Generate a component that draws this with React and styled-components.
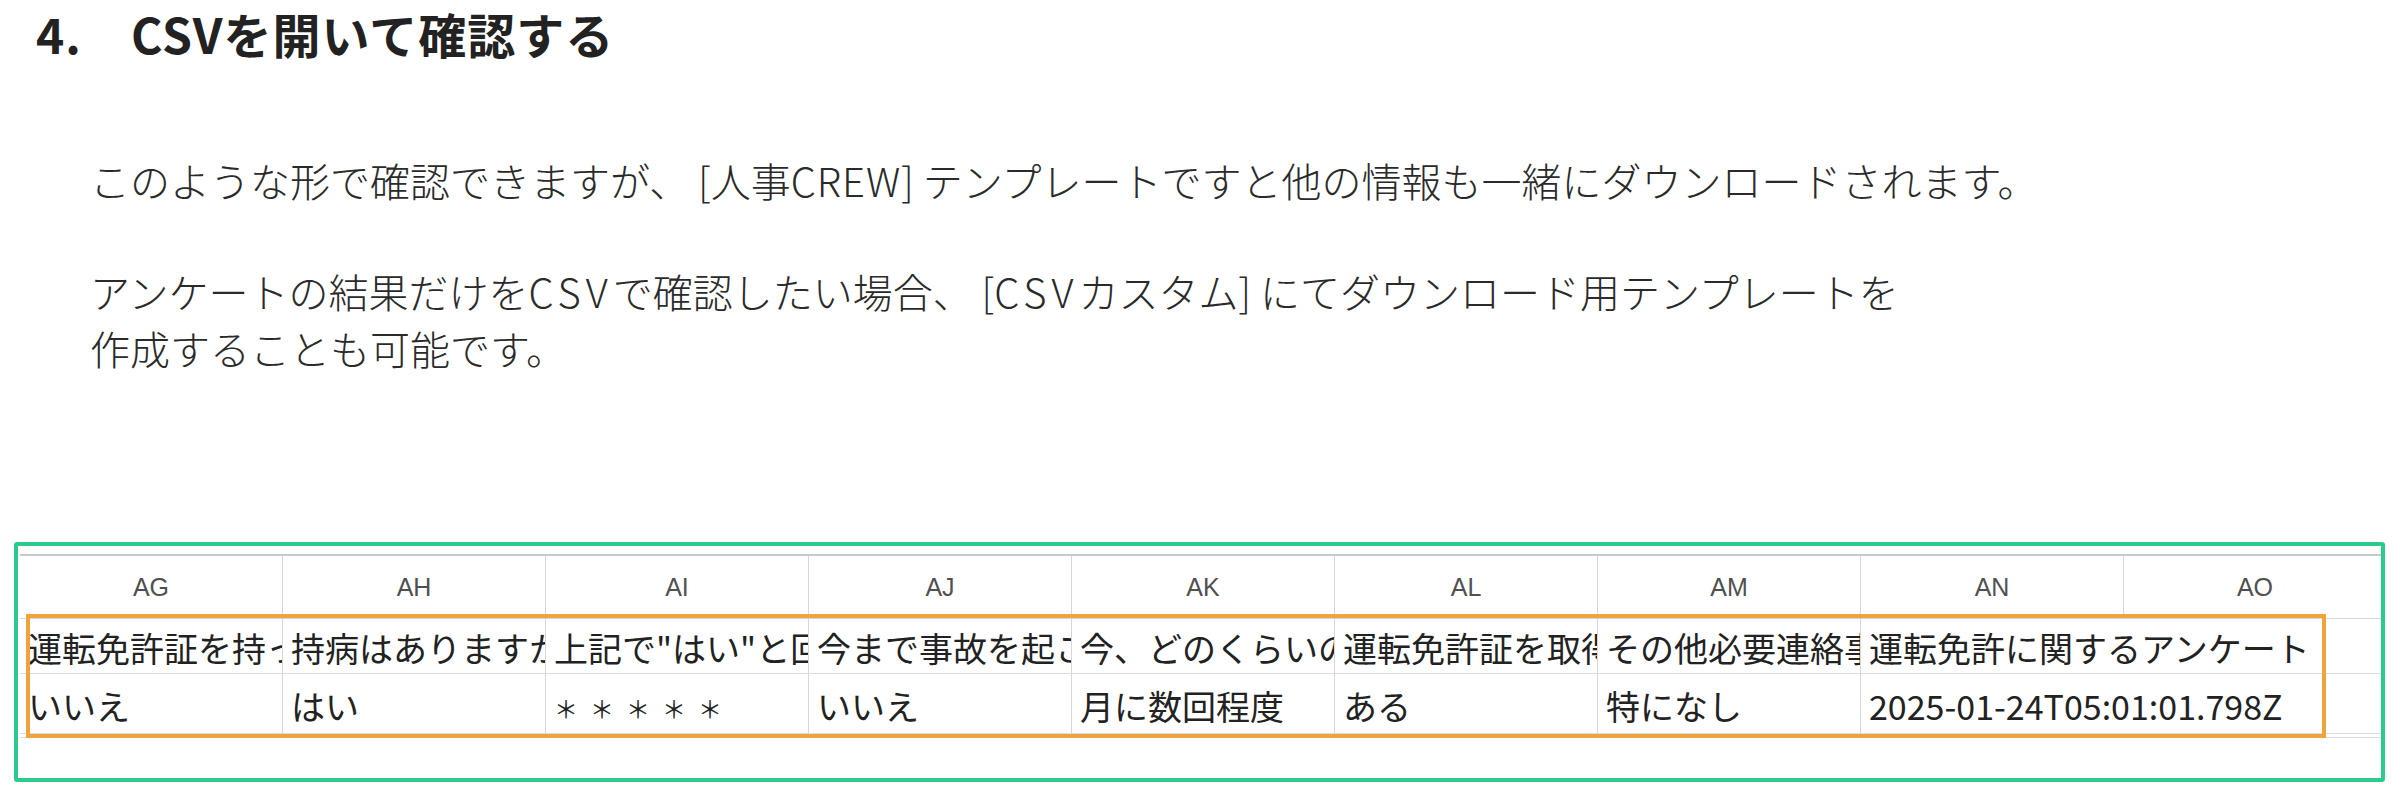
import React from "react";
import styled, { createGlobalStyle } from "styled-components";

const Global = createGlobalStyle`
  html, body { margin: 0; padding: 0; background: #ffffff; }
  body { font-family: "Noto Sans CJK JP", "Noto Sans", sans-serif; color: #222; }
`;

const Page = styled.div`
  display: flex;
  flex-direction: column;
  width: 2400px;
`;

const Heading = styled.h2`
  margin: 0;
  padding-left: 36px;
  font-family: "Noto Sans CJK JP", "Noto Sans", sans-serif;
  font-weight: 700;
  font-size: 48px;
  line-height: 66px;
  color: #222;
  letter-spacing: 1px;
  white-space: pre;
`;

const Body = styled.div`
  display: flex;
  flex-direction: column;
  gap: 54px;
  padding-left: 90px;
  margin-top: 86px;
`;

const Para = styled.p`
  margin: 0;
  font-family: "Noto Sans CJK JP", "Noto Sans", sans-serif;
  font-weight: 300;
  font-size: 40px;
  line-height: 57px;
  color: #2a2a2a;
`;

const Latin = styled.span`
  letter-spacing: ${(p) => p.$spacing || 0}px;
`;

const Frame = styled.div`
  position: relative;
  margin: 165px 15px 0 14px;
  height: 240px;
  box-sizing: border-box;
  border: 4px solid #2acb8d;
  border-radius: 3px;
  padding: 8px 3px 0 2px;
  overflow: hidden;
  background: #fff;
`;

const Sheet = styled.table`
  table-layout: fixed;
  width: 2358px;
  border-collapse: collapse;
  border-top: 2px solid #c9c9c9;
`;

const HeadCell = styled.th`
  width: 262px;
  height: 62px;
  padding: 0;
  font-family: "Liberation Sans", Arial, sans-serif;
  font-weight: 400;
  font-size: 25px;
  color: #505050;
  text-align: center;
  border-left: 1px solid #d6d6d6;
  border-bottom: 1px solid #d6d6d6;
  &:first-child { border-left: none; }
`;

const Cell = styled.td`
  padding: 3px 8px 0;
  overflow: hidden;
  white-space: nowrap;
  text-overflow: clip;
  font-family: "Noto Sans CJK JP", "Noto Sans", sans-serif;
  font-size: 34px;
  line-height: 51px;
  color: #222;
  border-left: 1px solid #d6d6d6;
  border-bottom: 1px solid #dcdcdc;
  &:first-child { border-left: none; }
`;

const Masked = styled.span`
  font-size: 24px;
  letter-spacing: 12px;
  vertical-align: middle;
`;

const Highlight = styled.div`
  position: absolute;
  left: 8px;
  top: 68px;
  width: 2300px;
  height: 124px;
  box-sizing: border-box;
  border: 4px solid #f0a23c;
  pointer-events: none;
`;

const columns = ["AG", "AH", "AI", "AJ", "AK", "AL", "AM", "AN", "AO"];

const questionRow = [
  "運転免許証を持っていますか？",
  "持病はありますか？",
  "上記で\"はい\"と回答した方",
  "今まで事故を起こしたことはありますか？",
  "今、どのくらいの頻度で運転しますか？",
  "運転免許証を取得してから",
  "その他必要連絡事項",
];

const answerRow = [
  "いいえ",
  "はい",
  <Masked key="m">＊＊＊＊＊</Masked>,
  "いいえ",
  "月に数回程度",
  "ある",
  "特になし",
];

export default function App() {
  return (
    <Page>
      <Global />
      <Heading>{"4.　CSVを開いて確認する"}</Heading>
      <Body>
        <Para>
          このような形で確認できますが、 [人事<Latin $spacing={1}>CREW</Latin>] テンプレートですと他の情報も一緒にダウンロードされます。
        </Para>
        <Para>
          アンケートの結果だけを<Latin $spacing={5}>CSV</Latin>で確認したい場合、 [<Latin $spacing={5}>CSV</Latin>カスタム] にてダウンロード用テンプレートを
          <br />
          作成することも可能です。
        </Para>
      </Body>
      <Frame>
        <Sheet>
          <thead>
            <tr>
              {columns.map((c) => (
                <HeadCell key={c}>{c}</HeadCell>
              ))}
            </tr>
          </thead>
          <tbody>
            <tr>
              {questionRow.map((t, i) => (
                <Cell key={i}>{t}</Cell>
              ))}
              <Cell colSpan={2}>運転免許に関するアンケート</Cell>
            </tr>
            <tr>
              {answerRow.map((t, i) => (
                <Cell key={i}>{t}</Cell>
              ))}
              <Cell colSpan={2}>2025-01-24T05:01:01.798Z</Cell>
            </tr>
            <tr>
              {columns.map((c) => (
                <Cell key={c} />
              ))}
            </tr>
          </tbody>
        </Sheet>
        <Highlight />
      </Frame>
    </Page>
  );
}
